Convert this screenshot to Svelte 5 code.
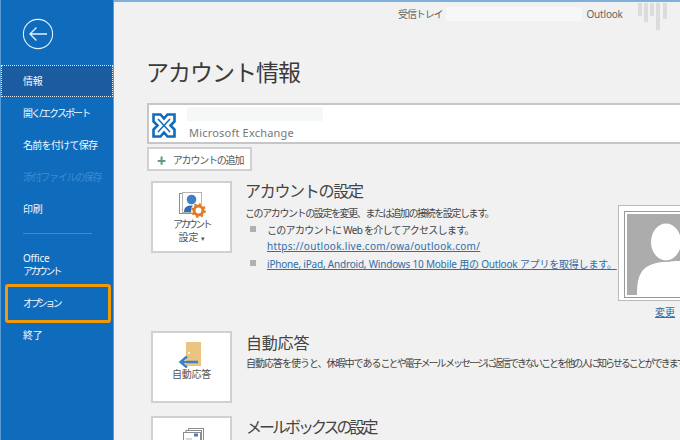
<script>
  const nav = [
    { label: '開く/エクスポート', cls: 'tight-a' },
    { label: '名前を付けて保存', cls: 'tight-b' },
    { label: '添付ファイルの保存', cls: 'tight-c off' },
    { label: '印刷', cls: '' }
  ];
</script>

<div class="app">
  <aside class="side">
    <button class="back" aria-label="戻る">
      <svg width="32" height="32" viewBox="0 0 32 32" fill="none" stroke="#e6f0fa" stroke-width="1.1">
        <circle cx="16" cy="16" r="14.6" />
        <path d="M8 16H25M14.5 9.5L8 16L14.5 22.5" stroke-width="1.4" />
      </svg>
    </button>
    <div class="item active">情報</div>
    {#each nav as n}
      <div class="item {n.cls}">{n.label}</div>
    {/each}
    <div class="rule"></div>
    <div class="item two">Office<br /><span class="kana">アカウント</span></div>
    <div class="item opt"><span class="kana">オプション</span></div>
    <div class="item end">終了</div>
  </aside>

  <main class="main">
    <div class="bar">
      <span class="inbox">受信トレイ</span>
      <span class="blank"></span>
      <span class="app-name">Outlook</span>
      <span class="ctrls">
        <i class="c1"></i><i class="c2"></i><i class="c3"></i><i class="c4"></i><i class="c5"></i>
      </span>
    </div>

    <h1>アカウント情報</h1>

    <div class="account">
      <svg class="ex" width="24" height="25" viewBox="0 0 24 25" fill="none" stroke="#0f6cbd">
        <path d="M1.5 1.5H8.5L12 5.5L15.5 1.5H22.5V8.5L18.5 12.5L22.5 16.5V23.5H15.5L12 19.5L8.5 23.5H1.5V16.5L5.5 12.5L1.5 8.5Z" stroke-width="2.6" />
        <path d="M6 6L18 19M18 6L6 19" stroke-width="1.5" />
      </svg>
      <div class="acct-text">
        <div class="acct-blank"></div>
        <div class="acct-type">Microsoft Exchange</div>
      </div>
    </div>

    <button class="add"><span class="plus">✚</span>アカウントの追加</button>

    <section class="row first">
      <div class="tile">
        <svg width="30" height="26" viewBox="0 0 30 26">
          <rect x="2.5" y="1.5" width="20" height="20" fill="#fff" stroke="#8d8d8d" />
          <rect x="5.5" y="0.5" width="19" height="20" fill="#fff" stroke="#b5b5b5" />
          <circle cx="14.5" cy="7.5" r="4.8" fill="#3f80c3" />
          <path d="M7 20C7 15 10 13.5 14.5 13.5C18 13.5 20 15 20 20Z" fill="#2f6fb5" />
          <circle cx="21.5" cy="18.5" r="7.5" fill="#fff" />
          <circle cx="21.5" cy="18.5" r="4.4" fill="none" stroke="#e27b26" stroke-width="3" />
          <circle cx="21.5" cy="18.5" r="6.4" fill="none" stroke="#e27b26" stroke-width="2" stroke-dasharray="2.4 2.6" />
        </svg>
        <span><span class="kana">アカウント</span><br />設定 <small>▾</small></span>
      </div>
      <div class="info">
        <h2 class="h-acct">アカウントの設定</h2>
        <p class="p-acct">このアカウントの設定を変更、または追加の接続を設定します。</p>
        <ul>
          <li>
            <span class="li-text">このアカウントに Web を介してアクセスします。</span>
            <a class="url" href="#a">https://outlook.live.com/owa/outlook.com/</a>
          </li>
          <li>
            <a href="#a">iPhone, iPad, Android, Windows 10 Mobile 用の Outlook アプリを取得します。</a>
          </li>
        </ul>
      </div>
      <div class="photo">
        <div class="frame">
          <svg width="53" height="81" viewBox="0 0 53 81">
            <rect width="53" height="81" fill="#acacac" />
            <path d="M10 81C10 62 14 54 26 50C34 47 53 47 53 47V81Z" fill="#fff" />
            <ellipse cx="39" cy="28" rx="16.5" ry="20" fill="#acacac" />
            <ellipse cx="39" cy="28" rx="15" ry="18.5" fill="#fff" />
          </svg>
        </div>
        <a class="change" href="#a">変更</a>
      </div>
    </section>

    <section class="row second">
      <div class="tile">
        <svg width="30" height="26" viewBox="0 0 30 26">
          <rect x="9" y="0" width="15" height="24" fill="#eac581" />
          <circle cx="12" cy="11" r="1" fill="#fff" />
          <path d="M21 20H4M10 14.5L3.5 20L10 25.5" fill="none" stroke="#3f80c3" stroke-width="2.4" />
        </svg>
        <span>自動応答</span>
      </div>
      <div class="info">
        <h2>自動応答</h2>
        <p class="p-auto">自動応答を使うと、休暇中である<span class="p-rest">ことや電子メール メッセージに返信できないことを他の人に知らせることができます。</span></p>
      </div>
    </section>

    <section class="row third">
      <div class="tile">
        <svg width="30" height="24" viewBox="0 0 30 24" fill="none">
          <rect x="11.5" y="1.5" width="15" height="22" fill="#fff" stroke="#8d8d8d" />
          <rect x="9" y="3.5" width="15.5" height="22" fill="#fff" stroke="#8d8d8d" />
          <rect x="6.5" y="5.5" width="17" height="22" fill="#fff" stroke="#8d8d8d" />
          <rect x="17" y="6.5" width="4" height="3" fill="#3f80c3" />
          <path d="M9 12H15" stroke="#b5b5b5" />
        </svg>
      </div>
      <div class="info">
        <h2 class="h-mail">メールボックスの設定</h2>
      </div>
    </section>
  </main>
</div>

<style>
  :global(body) {
    margin: 0;
    overflow: hidden;
  }
  .app {
    display: flex;
    width: 680px;
    height: 440px;
    overflow: hidden;
    background: #f1f1f1;
    font-family: "Noto Sans", "Noto Sans CJK JP", sans-serif;
    color: #444;
  }
  .side {
    box-sizing: border-box;
    flex: 0 0 114px;
    height: 440px;
    padding-top: 17px;
    background: #0f6cbd;
    border-left: 1px solid #5a9bd5;
    border-right: 1px solid #5a9bd5;
    color: #fff;
    display: flex;
    flex-direction: column;
  }
  .back {
    flex: none;
    width: 32px;
    height: 32px;
    margin: 1px 0 15px 21px;
    padding: 0;
    border: 0;
    background: none;
    display: block;
  }
  .item {
    box-sizing: border-box;
    flex: none;
    height: 32px;
    padding-left: 22px;
    font-size: 10px;
    line-height: 32px;
    letter-spacing: -0.2px;
    white-space: nowrap;
    color: #f2f7fc;
  }
  .kana {
    letter-spacing: -2.6px;
  }
  .tight-a {
    letter-spacing: -1.9px;
  }
  .tight-b {
    letter-spacing: -0.7px;
  }
  .tight-c {
    letter-spacing: -1.3px;
  }
  .active {
    background: #1a5c9f;
    outline: 1px dotted #dfe9f3;
    outline-offset: -1px;
  }
  .off {
    color: #3d8bd0;
  }
  .rule {
    flex: none;
    height: 1px;
    width: 69px;
    margin: 8px 0 0 22px;
    background: #3d8bd0;
  }
  .two {
    margin-top: 18px;
    height: 26px;
    line-height: 13px;
  }
  .opt {
    margin: 6px 2px 0 4px;
    height: 39px;
    line-height: 33px;
    padding-left: 15px;
    border: 3px solid #f09a0a;
    border-radius: 3px;
  }
  .end {
    margin-top: -4px;
  }
  .main {
    flex: 1;
    min-width: 0;
    height: 440px;
    border-top: 2px solid #7fb0dc;
    box-sizing: border-box;
    display: flex;
    flex-direction: column;
    padding-left: 33px;
  }
  .bar {
    flex: none;
    height: 22px;
    display: flex;
    align-items: flex-start;
    margin-left: 251px;
    font-size: 10px;
    color: #666;
    white-space: nowrap;
  }
  .inbox {
    line-height: 24px;
    letter-spacing: -1.1px;
  }
  .blank {
    width: 136px;
    height: 14px;
    margin: 5px 5px 0 3px;
    background: #f6f8f7;
  }
  .app-name {
    line-height: 24px;
    letter-spacing: -0.2px;
  }
  .ctrls {
    display: flex;
    align-items: flex-start;
    gap: 2px;
    margin: 1px 0 0 15px;
  }
  .ctrls i {
    width: 4px;
    background: #dcdcdc;
    display: block;
  }
  .c1 { height: 13px; }
  .c2 { height: 19px; }
  .c3 { height: 13px; }
  .c4 { height: 27px; }
  .c5 { height: 16px; margin-left: 1px; }
  h1 {
    flex: none;
    margin: 30px 0 0 -1px;
    height: 49px;
    font-size: 23px;
    line-height: 36px;
    font-weight: 400;
    letter-spacing: -1px;
    color: #3a3a3a;
    white-space: nowrap;
  }
  .account {
    flex: none;
    box-sizing: border-box;
    height: 41px;
    background: #fff;
    border: 2px solid #c6c6c6;
    border-right: 0;
    display: flex;
    padding: 2px 0 0 3px;
  }
  .ex {
    margin-top: 6px;
  }
  .acct-text {
    margin-left: 11px;
  }
  .acct-blank {
    width: 136px;
    height: 14px;
    background: #f6f8f7;
  }
  .acct-type {
    margin: 3px 0 0 2px;
    font-size: 11px;
    line-height: 18px;
    letter-spacing: 0.2px;
    color: #777;
  }
  .add {
    flex: none;
    box-sizing: border-box;
    width: 105px;
    height: 24px;
    margin-top: 3px;
    padding: 0 0 0 8px;
    background: #fff;
    border: 2px solid #d0d0d0;
    font: inherit;
    font-size: 10px;
    letter-spacing: -1.2px;
    color: #555;
    text-align: left;
    white-space: nowrap;
  }
  .plus {
    color: #5a9e83;
    font-size: 9px;
    margin-right: 8px;
  }
  .row {
    flex: none;
    display: flex;
    margin-left: 4px;
  }
  .first {
    margin-top: 10px;
    height: 150px;
  }
  .second {
    height: 85px;
  }
  .third {
    height: 60px;
  }
  .tile {
    flex: none;
    box-sizing: border-box;
    width: 81px;
    height: 72px;
    background: #fff;
    border: 2px solid #d0d0d0;
    display: flex;
    flex-direction: column;
    align-items: center;
    padding-top: 9px;
    font-size: 10px;
    line-height: 13px;
    letter-spacing: -0.2px;
    color: #555;
    text-align: center;
  }
  .tile small {
    font-size: 7px;
  }
  .info {
    flex: none;
    margin-left: 14px;
  }
  .first .info {
    width: 373px;
    margin-left: 13px;
  }
  .second .info {
    margin-top: 2px;
  }
  .third .info {
    margin-top: 1px;
  }
  h2 {
    margin: 0;
    font-size: 16px;
    line-height: 20px;
    font-weight: 400;
    color: #444;
    white-space: nowrap;
    letter-spacing: -0.2px;
  }
  .h-acct {
    letter-spacing: -1.3px;
  }
  .h-mail {
    letter-spacing: -3px;
  }
  p {
    margin: 5px 0 0;
    font-size: 10px;
    line-height: 14px;
    color: #444;
    white-space: nowrap;
  }
  .p-acct {
    letter-spacing: -1.4px;
  }
  .p-auto {
    margin-top: 3px;
    letter-spacing: -1px;
  }
  .p-rest {
    letter-spacing: -2px;
  }
  ul {
    list-style: none;
    margin: 2px 0 0;
    padding: 0 0 0 22px;
    font-size: 10px;
    letter-spacing: -0.2px;
    line-height: 16px;
    white-space: nowrap;
  }
  li {
    position: relative;
    display: flex;
    flex-direction: column;
  }
  li + li {
    margin-top: 2px;
  }
  li::before {
    content: "";
    position: absolute;
    left: -17px;
    top: 4px;
    width: 6px;
    height: 6px;
    background: #b0b0b0;
  }
  .li-text {
    letter-spacing: -0.7px;
  }
  .url {
    letter-spacing: 0.3px;
  }
  a {
    color: #2f6ea8;
    text-decoration: underline;
  }
  .photo {
    flex: none;
    width: 70px;
    margin-top: 24px;
  }
  .frame {
    box-sizing: border-box;
    width: 70px;
    height: 96px;
    padding: 5px;
    background: #fff;
    border: 1px solid #bbb;
  }
  .frame svg {
    display: block;
    border: 1px solid #999;
    padding: 2px;
    background: #fff;
  }
  .change {
    display: block;
    margin: 3px 0 0 37px;
    font-size: 10px;
    line-height: 16px;
  }
</style>
